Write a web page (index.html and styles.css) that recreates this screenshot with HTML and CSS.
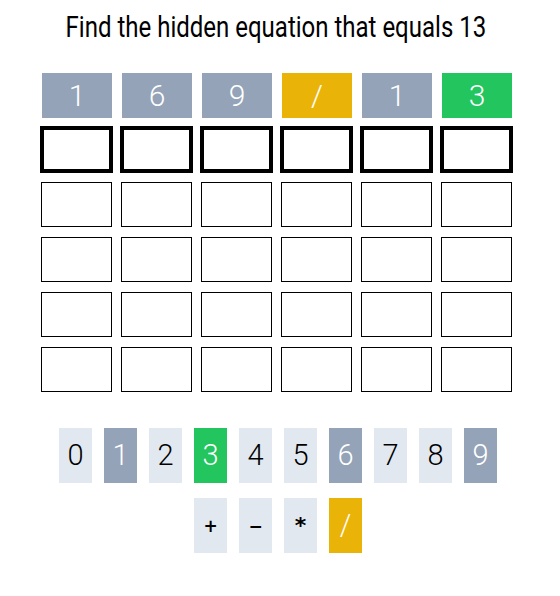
FILE: index.html
```html
<!DOCTYPE html>
<html>
<head>
<meta charset="utf-8">
<link rel="stylesheet" href="styles.css">
</head>
<body>
<div class="page">
  <h1 class="title"><span class="title-text">Find the hidden equation that equals 13</span></h1>
  <div class="board">
    <div class="row answer">
      <div class="tile gray">1</div>
      <div class="tile gray">6</div>
      <div class="tile gray">9</div>
      <div class="tile yellow">/</div>
      <div class="tile gray">1</div>
      <div class="tile green">3</div>
    </div>
    <div class="row current">
      <div class="box"></div><div class="box"></div><div class="box"></div><div class="box"></div><div class="box"></div><div class="box"></div>
    </div>
    <div class="rows">
      <div class="row empty">
        <div class="box"></div><div class="box"></div><div class="box"></div><div class="box"></div><div class="box"></div><div class="box"></div>
      </div>
      <div class="row empty">
        <div class="box"></div><div class="box"></div><div class="box"></div><div class="box"></div><div class="box"></div><div class="box"></div>
      </div>
      <div class="row empty">
        <div class="box"></div><div class="box"></div><div class="box"></div><div class="box"></div><div class="box"></div><div class="box"></div>
      </div>
      <div class="row empty">
        <div class="box"></div><div class="box"></div><div class="box"></div><div class="box"></div><div class="box"></div><div class="box"></div>
      </div>
    </div>
  </div>
  <div class="keyboard">
    <div class="keys">
      <button class="key">0</button>
      <button class="key gray">1</button>
      <button class="key">2</button>
      <button class="key green">3</button>
      <button class="key">4</button>
      <button class="key">5</button>
      <button class="key gray">6</button>
      <button class="key">7</button>
      <button class="key">8</button>
      <button class="key gray">9</button>
    </div>
    <div class="keys">
      <button class="key op">+</button>
      <button class="key op">−</button>
      <button class="key op op-mul">*</button>
      <button class="key yellow">/</button>
    </div>
  </div>
</div>
</body>
</html>
```
FILE: styles.css
```css
html, body {
  margin: 0;
  padding: 0;
  background: #ffffff;
}
.page {
  width: 560px;
  font-family: Roboto, "DejaVu Sans", sans-serif;
  font-weight: 300;
  color: #000;
}
.title {
  margin: 0;
  padding-top: 9px;
  height: 36px;
  line-height: 36px;
  font-size: 30px;
  font-weight: 400;
  text-align: center;
  padding-right: 9px;
}
.title-text {
  display: inline-block;
  transform: scaleX(0.8);
  white-space: nowrap;
}
.board {
  margin-top: 28px;
  padding-right: 7px;
  display: flex;
  flex-direction: column;
  align-items: center;
}
.row {
  display: flex;
}
.answer {
  gap: 10px;
  padding-left: 1px;
}
.tile {
  width: 70px;
  height: 45px;
  display: flex;
  align-items: center;
  justify-content: center;
  color: #fff;
  font-size: 30px;
  font-weight: 300;
  line-height: 1;
}
.gray { background: #94a3b8; color: #fff; }
.yellow { background: #eab308; color: #fff; }
.green { background: #22c55e; color: #fff; }
.current {
  margin-top: 8px;
  gap: 7px;
}
.current .box {
  width: 73px;
  height: 47px;
  box-sizing: border-box;
  border: 4px solid #000;
}
.rows {
  margin-top: 9px;
  display: flex;
  flex-direction: column;
  gap: 10px;
}
.empty {
  gap: 9px;
}
.empty .box {
  width: 71px;
  height: 45px;
  box-sizing: border-box;
  border: 1.5px solid #000;
}
.keyboard {
  margin-top: 36px;
  padding-right: 4px;
  display: flex;
  flex-direction: column;
  align-items: center;
  gap: 15px;
}
.keys {
  display: flex;
  gap: 12px;
}
.key {
  width: 33px;
  height: 55px;
  padding: 0;
  border: none;
  background: #e2e8f0;
  color: #000;
  font-family: Roboto, "DejaVu Sans", sans-serif;
  font-weight: 300;
  font-size: 29px;
  line-height: 1;
  display: flex;
  align-items: center;
  justify-content: center;
}
.key.gray { background: #94a3b8; color: #fff; }
.key.green { background: #22c55e; color: #fff; }
.key.yellow { background: #eab308; color: #fff; }
.key.op {
  font-family: "DejaVu Sans", sans-serif;
  font-weight: bold;
  font-size: 17px;
  padding-top: 2px;
}
.key.op-mul {
  font-size: 22px;
  padding-top: 0;
}
```
